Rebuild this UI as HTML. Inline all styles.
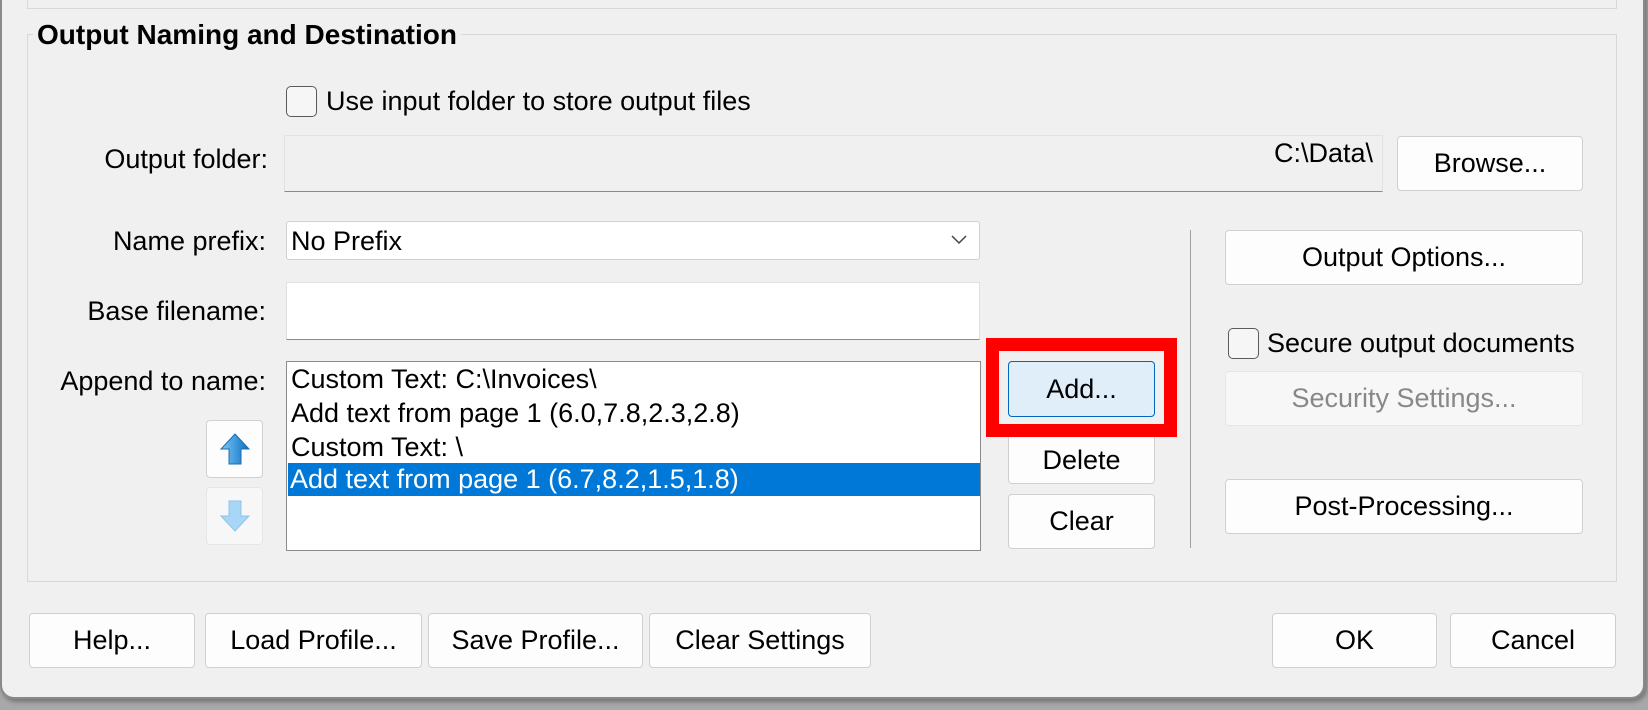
<!DOCTYPE html>
<html><head><meta charset="utf-8"><style>
*{box-sizing:border-box;margin:0;padding:0}
body{width:1648px;height:710px;background:#a8a8a8;position:relative;overflow:hidden;font-family:"Liberation Sans",sans-serif;font-size:27px;color:#000}
.win{position:absolute;left:0;top:-20px;width:1645px;height:719px;background:#f0f0f0;border:2px solid #8a8a8a;border-top:none;border-radius:0 0 14px 14px;box-shadow:2px 3px 4px #777}
.a{position:absolute;white-space:nowrap}
.btn{position:absolute;background:#fdfdfd;border:1px solid #d0d0d0;border-radius:4px;display:flex;align-items:center;justify-content:center;white-space:nowrap}
.lbl{position:absolute;text-align:right;white-space:nowrap}
.cb{position:absolute;width:31px;height:31px;border:1.5px solid #5a5a5a;border-radius:5px;background:#f6f6f6}
</style></head><body>
<div class="win"></div>
<div class="a" style="left:27px;top:-10px;width:1590px;height:19px;border:1px solid #d8d8d8;border-top:none"></div>
<div class="a" style="left:27px;top:34px;width:1590px;height:548px;border:1px solid #d8d8d8"></div>
<div class="a" style="left:33px;top:19px;background:#f0f0f0;padding:0 4px;font-weight:bold;font-size:28px">Output Naming and Destination</div>

<div class="cb" style="left:286px;top:86px"></div>
<div class="a" style="left:326px;top:86px">Use input folder to store output files</div>

<div class="lbl" style="right:1380px;top:144px">Output folder:</div>
<div class="a" style="left:284px;top:135px;width:1099px;height:57px;background:#f0f0f0;border:1px solid #e2e2e2;border-bottom:1.5px solid #8a8a8a"></div>
<div class="a" style="right:275px;top:138px">C:\Data\</div>
<div class="btn" style="left:1397px;top:136px;width:186px;height:55px">Browse...</div>

<div class="lbl" style="right:1382px;top:226px">Name prefix:</div>
<div class="a" style="left:286px;top:221px;width:694px;height:39px;background:#fff;border:1px solid #d0d0d0;border-radius:3px"></div>
<div class="a" style="left:291px;top:226px">No Prefix</div>
<svg class="a" style="left:950px;top:234px" width="18" height="12"><path d="M2 2l7 7 7-7" fill="none" stroke="#444" stroke-width="1.5"/></svg>

<div class="a" style="left:1190px;top:230px;width:1px;height:318px;background:#a0a0a0"></div>
<div class="btn" style="left:1225px;top:230px;width:358px;height:55px">Output Options...</div>

<div class="lbl" style="right:1382px;top:296px">Base filename:</div>
<div class="a" style="left:286px;top:282px;width:694px;height:58px;background:#fff;border:1px solid #e0e0e0;border-bottom:1.5px solid #8a8a8a"></div>

<div class="cb" style="left:1228px;top:328px"></div>
<div class="a" style="left:1267px;top:328px">Secure output documents</div>
<div class="btn" style="left:1225px;top:371px;width:358px;height:55px;background:#f7f7f7;border-color:#e6e6e6;color:#888">Security Settings...</div>

<div class="lbl" style="right:1382px;top:366px">Append to name:</div>
<div class="a" style="left:286px;top:361px;width:695px;height:190px;background:#fff;border:1.5px solid #8a8a8a"></div>
<div class="a" style="left:291px;top:362px;line-height:34px">Custom Text: C:\Invoices\<br>Add text from page 1 (6.0,7.8,2.3,2.8)<br>Custom Text: \</div>
<div class="a" style="left:288px;top:463px;width:692px;height:33px;background:#0078d7;color:#fff;padding-left:2px;line-height:33px">Add text from page 1 (6.7,8.2,1.5,1.8)</div>

<div class="btn" style="left:206px;top:420px;width:57px;height:58px">
<svg width="32" height="34" viewBox="0 0 32 34"><defs><linearGradient id="g" x1="0" x2="1"><stop offset="0" stop-color="#7cc8f5"/><stop offset="1" stop-color="#0a6fc4"/></linearGradient></defs><path d="M16 2L30 17H22V32H10V17H2Z" fill="url(#g)" stroke="#1a6fb5" stroke-width="1"/></svg></div>
<div class="btn" style="left:206px;top:487px;width:57px;height:58px;background:#f7f7f7;border-color:#e6e6e6">
<svg width="32" height="34" viewBox="0 0 32 34"><path d="M10 2H22V17H30L16 32 2 17H10Z" fill="#a8d6f6" stroke="#8cc4ec" stroke-width="1"/></svg></div>

<div class="a" style="left:986px;top:338px;width:191px;height:99px;border:13px solid #ff0000"></div>
<div class="btn" style="left:1008px;top:361px;width:147px;height:56px;background:#e0eef9;border-color:#0067c0">Add...</div>
<div class="btn" style="left:1008px;top:437px;width:147px;height:47px;border-top:none;border-radius:0 0 4px 4px">Delete</div>
<div class="btn" style="left:1008px;top:494px;width:147px;height:55px">Clear</div>

<div class="btn" style="left:1225px;top:479px;width:358px;height:55px">Post-Processing...</div>

<div class="btn" style="left:29px;top:613px;width:166px;height:55px">Help...</div>
<div class="btn" style="left:205px;top:613px;width:217px;height:55px">Load Profile...</div>
<div class="btn" style="left:428px;top:613px;width:215px;height:55px">Save Profile...</div>
<div class="btn" style="left:649px;top:613px;width:222px;height:55px">Clear Settings</div>
<div class="btn" style="left:1272px;top:613px;width:165px;height:55px">OK</div>
<div class="btn" style="left:1450px;top:613px;width:166px;height:55px">Cancel</div>
</body></html>
